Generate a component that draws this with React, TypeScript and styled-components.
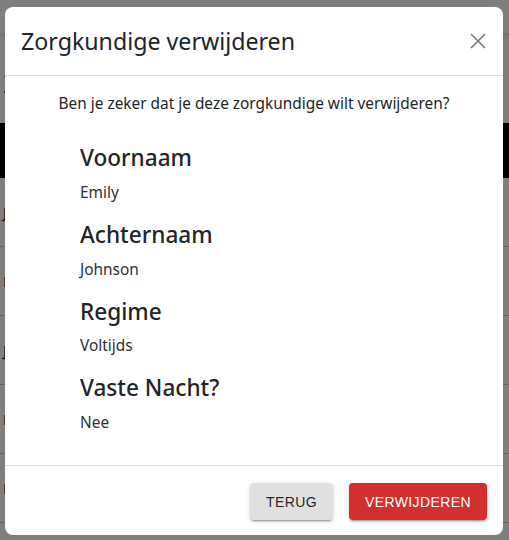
import React from 'react';
import styled, { createGlobalStyle } from 'styled-components';

const GlobalStyle = createGlobalStyle`
  html, body {
    margin: 0;
    padding: 0;
    width: 509px;
    height: 540px;
    overflow: hidden;
    background: #ffffff;
    font-family: "Noto Sans", "Open Sans", sans-serif;
    color: #212529;
  }
  * { box-sizing: border-box; }
`;

const Page = styled.div`
  position: relative;
  width: 509px;
  height: 540px;
  overflow: hidden;
`;

const NavBar = styled.div`
  height: 33px;
  background: #ffffff;
  box-shadow: 0 2px 8px rgba(0, 0, 0, 0.2);
`;

const PageTitle = styled.div`
  padding: 34px 0 0 3px;
  height: 90px;
  font-size: 24px;
  color: #0d6efd;
`;

const TableHead = styled.div`
  height: 55px;
  background: #000000;
`;

const TableRow = styled.div<{ h: number }>`
  height: ${(p) => p.h}px;
  border-bottom: 1px solid #c8c8c8;
  display: flex;
  align-items: center;
  padding-left: 3px;
  font-size: 14px;
`;

const Backdrop = styled.div`
  position: absolute;
  inset: 0;
  background: rgba(0, 0, 0, 0.5);
  padding: 7px 6px 0 5px;
`;

const Modal = styled.div`
  background: #ffffff;
  border-radius: 8px;
  display: flex;
  flex-direction: column;
  overflow: hidden;
`;

const Header = styled.div`
  display: flex;
  align-items: center;
  justify-content: space-between;
  padding: 16px;
  border-bottom: 1px solid #dee2e6;
`;

const Title = styled.h5`
  margin: 0;
  font-size: 23.2px;
  font-weight: 400;
  line-height: 36px;
  color: #212529;
`;

const CloseButton = styled.button`
  width: 18px;
  height: 18px;
  padding: 0;
  border: none;
  background: transparent;
  display: flex;
  align-items: center;
  justify-content: center;
  cursor: pointer;
`;

const Body = styled.div`
  padding: 16px 16px 30px;
`;

const Question = styled.p`
  margin: 0 0 16px;
  text-align: center;
  font-size: 15.4px;
  line-height: 24px;
`;

const Fields = styled.div`
  padding: 12px 0 0 59px;
`;

const Label = styled.h4`
  margin: 0 0 8px;
  font-size: 22.6px;
  font-weight: 500;
  line-height: 28.8px;
  color: #212529;
`;

const Value = styled.p`
  margin: 0 0 16px;
  font-size: 15.4px;
  line-height: 24px;
  color: #2b2f33;
  &:last-child { margin-bottom: 0; }
`;

const Footer = styled.div`
  display: flex;
  justify-content: flex-end;
  gap: 16px;
  padding: 17px 16px 15px;
  border-top: 1px solid #dee2e6;
`;

const ActionButton = styled.button<{ danger?: boolean }>`
  height: 37px;
  padding: 6px 16px;
  border: none;
  border-radius: 4px;
  font-family: "Liberation Sans", Arial, sans-serif;
  font-size: 14px;
  font-weight: 400;
  letter-spacing: 0.4px;
  text-transform: uppercase;
  color: ${(p) => (p.danger ? '#ffffff' : 'rgba(0, 0, 0, 0.87)')};
  background: ${(p) => (p.danger ? '#d32f2f' : '#e0e0e0')};
  box-shadow: 0 3px 1px -2px rgba(0, 0, 0, 0.2), 0 2px 2px 0 rgba(0, 0, 0, 0.14),
    0 1px 5px 0 rgba(0, 0, 0, 0.12);
  cursor: pointer;
`;

const fields = [
  { label: 'Voornaam', value: 'Emily' },
  { label: 'Achternaam', value: 'Johnson' },
  { label: 'Regime', value: 'Voltijds' },
  { label: 'Vaste Nacht?', value: 'Nee' },
];

export default function App() {
  return (
    <Page>
      <GlobalStyle />
      <NavBar />
      <PageTitle>Z</PageTitle>
      <TableHead />
      <TableRow h={69}>J</TableRow>
      <TableRow h={69}>E</TableRow>
      <TableRow h={69}>J</TableRow>
      <TableRow h={69}>E</TableRow>
      <TableRow h={69}>E</TableRow>
      <Backdrop>
        <Modal>
          <Header>
            <Title>Zorgkundige verwijderen</Title>
            <CloseButton aria-label="Sluiten">
              <svg width="16" height="16" viewBox="0 0 16 16">
                <path d="M1 1L15 15M15 1L1 15" stroke="#777" strokeWidth="1.6" />
              </svg>
            </CloseButton>
          </Header>
          <Body>
            <Question>Ben je zeker dat je deze zorgkundige wilt verwijderen?</Question>
            <Fields>
              {fields.map((f) => (
                <React.Fragment key={f.label}>
                  <Label>{f.label}</Label>
                  <Value>{f.value}</Value>
                </React.Fragment>
              ))}
            </Fields>
          </Body>
          <Footer>
            <ActionButton>Terug</ActionButton>
            <ActionButton danger>Verwijderen</ActionButton>
          </Footer>
        </Modal>
      </Backdrop>
    </Page>
  );
}
